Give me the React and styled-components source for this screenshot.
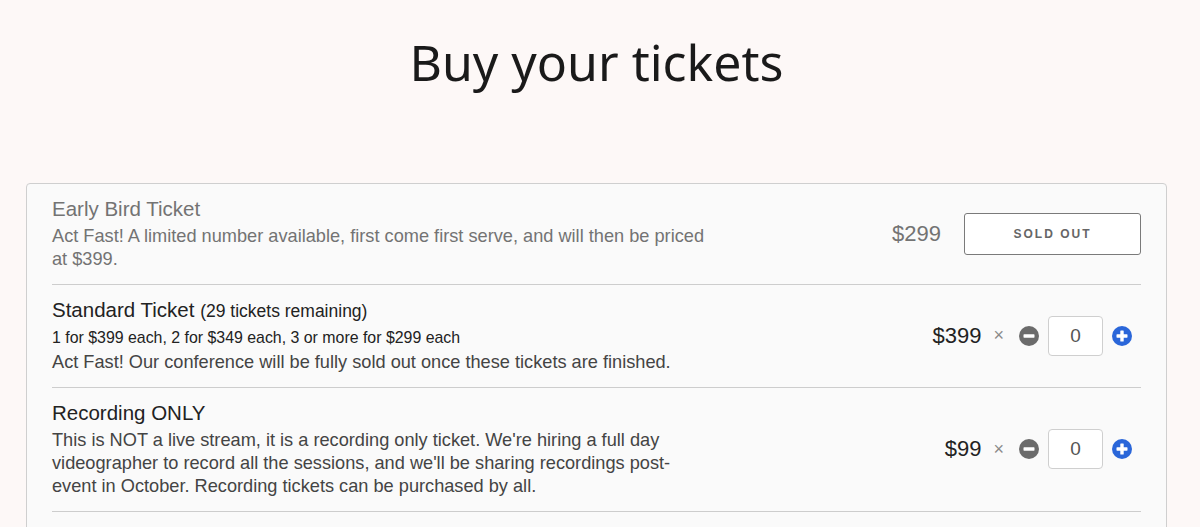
import React from "react"
import styled, { createGlobalStyle } from "styled-components"

const GlobalStyle = createGlobalStyle`
  body {
    margin: 0;
    background: #fdf8f7;
    font-family: "Liberation Sans", Arial, sans-serif;
    color: #222;
  }
`

const Page = styled.div`
  padding: 24px 33px 0 26px;
`

const Heading = styled.h1`
  margin: 0 0 83px;
  text-align: center;
  font-family: "Noto Sans", sans-serif;
  font-weight: 400;
  font-size: 50px;
  line-height: 76px;
  color: #1a1a1a;
`

const Panel = styled.div`
  background: #fafafa;
  border: 1px solid #cfcfcf;
  border-radius: 4px;
  padding: 0 25px 40px;
`

const Row = styled.div`
  display: flex;
  align-items: center;
  justify-content: space-between;
  padding: 12px 0 13px;
  border-bottom: 1px solid #cdcdcd;
  color: ${(p) => (p.$disabled ? "#737373" : "#222")};
`

const Info = styled.div`
  max-width: 657px;
`

const Title = styled.div`
  font-size: 20.5px;
  line-height: 26px;
`

const Remaining = styled.span`
  font-size: 17.5px;
`

const Tiers = styled.div`
  margin-top: 3px;
  font-size: 15.9px;
  line-height: 21px;
`

const Desc = styled.div`
  margin-top: 3px;
  font-size: 18.2px;
  line-height: 23px;
  color: ${(p) => (p.$disabled ? "#737373" : "#444")};
`

const Controls = styled.div`
  display: flex;
  align-items: center;
`

const Price = styled.span`
  font-size: 22px;
  color: ${(p) => (p.$disabled ? "#737373" : "#222")};
  margin-right: ${(p) => (p.$disabled ? "23px" : "12px")};
`

const Times = styled.span`
  font-size: 18px;
  color: #8a8a8a;
  margin-right: 15px;
`

const SoldOut = styled.button`
  width: 177px;
  height: 42px;
  background: #fff;
  border: 1.5px solid #7a7a7a;
  border-radius: 3px;
  font-family: "Liberation Sans", Arial, sans-serif;
  font-weight: 700;
  font-size: 12px;
  letter-spacing: 2px;
  color: #666;
`

const QtyInput = styled.div`
  width: 55px;
  height: 40px;
  margin: 0 9px;
  box-sizing: border-box;
  display: flex;
  align-items: center;
  justify-content: center;
  background: #fff;
  border: 1px solid #cfcfcf;
  border-radius: 4px;
  font-size: 19px;
  color: #555;
`

const IconButton = styled.span`
  display: flex;
  margin-right: ${(p) => (p.$last ? "9px" : "0")};
`

const Minus = () => (
  <svg width="20" height="20" viewBox="0 0 20 20">
    <circle cx="10" cy="10" r="10" fill="#6b6b6b" />
    <rect x="4.5" y="8.3" width="11" height="3.4" rx="0.6" fill="#fff" />
  </svg>
)

const Plus = () => (
  <svg width="20" height="20" viewBox="0 0 20 20">
    <circle cx="10" cy="10" r="10" fill="#2a66d9" />
    <rect x="4.5" y="8.3" width="11" height="3.4" rx="0.6" fill="#fff" />
    <rect x="8.3" y="4.5" width="3.4" height="11" rx="0.6" fill="#fff" />
  </svg>
)

const Quantity = ({ price }) => (
  <Controls>
    <Price>{price}</Price>
    <Times>×</Times>
    <IconButton>
      <Minus />
    </IconButton>
    <QtyInput>0</QtyInput>
    <IconButton $last>
      <Plus />
    </IconButton>
  </Controls>
)

const App = () => (
  <>
    <GlobalStyle />
    <Page>
      <Heading>Buy your tickets</Heading>
      <Panel>
        <Row $disabled>
          <Info>
            <Title>Early Bird Ticket</Title>
            <Desc $disabled>
              Act Fast! A limited number available, first come first serve, and
              will then be priced at $399.
            </Desc>
          </Info>
          <Controls>
            <Price $disabled>$299</Price>
            <SoldOut>SOLD OUT</SoldOut>
          </Controls>
        </Row>
        <Row>
          <Info>
            <Title>
              Standard Ticket <Remaining>(29 tickets remaining)</Remaining>
            </Title>
            <Tiers>1 for $399 each, 2 for $349 each, 3 or more for $299 each</Tiers>
            <Desc>
              Act Fast! Our conference will be fully sold out once these tickets
              are finished.
            </Desc>
          </Info>
          <Quantity price="$399" />
        </Row>
        <Row>
          <Info>
            <Title>Recording ONLY</Title>
            <Desc>
              This is NOT a live stream, it is a recording only ticket. We're
              hiring a full day videographer to record all the sessions, and
              we'll be sharing recordings post-event in October. Recording
              tickets can be purchased by all.
            </Desc>
          </Info>
          <Quantity price="$99" />
        </Row>
      </Panel>
    </Page>
  </>
)

export default App
